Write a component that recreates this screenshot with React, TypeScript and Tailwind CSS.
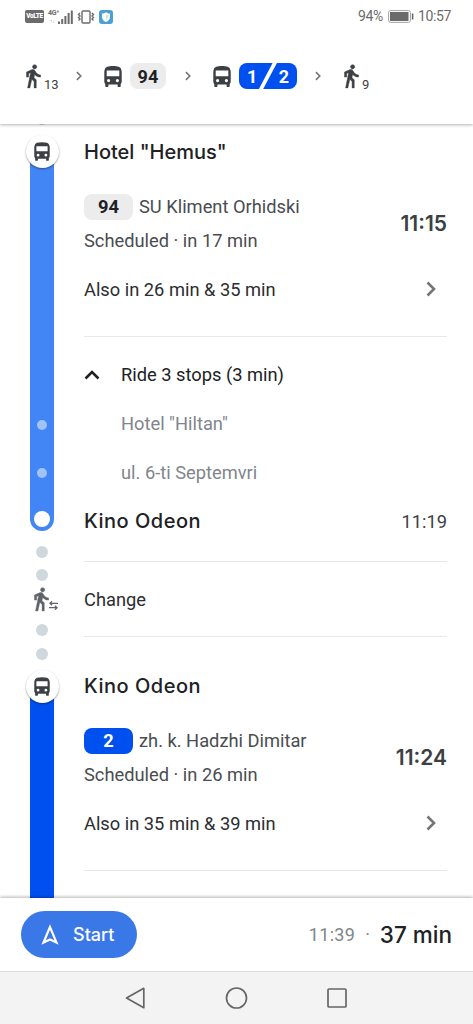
import React from "react";

interface DepartureProps {
  line: string;
  lineClass: string;
  direction: string;
  wait: string;
  also: string;
  time: string;
}

const display = "font-['Inter','Roboto',sans-serif]";

function Chevron({ className }: { className?: string }) {
  return (
    <svg
      viewBox="0 0 10 16"
      className={className}
      fill="none"
      stroke="currentColor"
      strokeWidth="2.6"
    >
      <path d="M1.500 1.500 8 8l-6.500 6.500" />
    </svg>
  );
}

function BusIcon({ className }: { className?: string }) {
  return (
    <svg viewBox="0 0 18 21" className={className} fill="currentColor" fillRule="evenodd">
      <path d="M9 0C4.200 0 1.400.8.900 3.200.5 4 .3 5 .3 6v9.800c0 .9.400 1.600 1 2.100V20c0 .6.400 1 1 1h1.100c.6 0 1-.4 1-1v-1.400h9.200V20c0 .6.400 1 1 1h1.100c.6 0 1-.4 1-1v-2.100c.6-.5 1-1.200 1-2.100V6c0-1-.2-2-.6-2.800C16.600.8 13.800 0 9 0zM2.700 4.500h12.600v5.700H2.700zM4.600 13a1.600 1.600 0 1 1 0 3.200 1.600 1.600 0 0 1 0-3.200zm8.800 0a1.600 1.600 0 1 1 0 3.200 1.600 1.600 0 0 1 0-3.200z" />
    </svg>
  );
}

function WalkIcon({ className }: { className?: string }) {
  return (
    <svg
      viewBox="0 0 24 24"
      className={className}
      fill="currentColor"
      stroke="currentColor"
      strokeWidth="0.400"
    >
      <path d="M13.500 5.500c1.100 0 2-.9 2-2s-.9-2-2-2-2 .9-2 2 .9 2 2 2zM9.800 8.900 7 23h2.100l1.800-8 2.100 2v6h2v-7.500l-2.100-2 .6-3C14.800 12 16.800 13 19 13v-2c-1.900 0-3.500-1-4.300-2.400l-1-1.600c-.4-.6-1-1-1.700-1-.3 0-.5.1-.8.1L6 8.300V13h2V9.600z" />
    </svg>
  );
}

function StatusBar() {
  return (
    <div className="flex h-[33px] items-center justify-between pl-[25px] pr-[22px] text-[#6b6b6b]">
      <div className="flex items-center">
        <span className="flex h-[13px] w-[19px] items-center justify-center rounded-[2px] bg-[#6b6b6b] text-[6.500px] font-black tracking-[-0.4px] text-white">
          VoLTE
        </span>
        <div className="ml-[4px] flex h-[15px] w-[11px] flex-col justify-between">
          <span className="text-[7px] leading-[8px] font-bold tracking-[-0.2px]">
            4G⁺
          </span>
          <span className="pl-[2px] text-[5px] leading-[6px] text-[#a0a0a0]">
            ↑↓
          </span>
        </div>
        <svg viewBox="0 0 15 14" className="-ml-px h-[14px] w-[15px]" fill="currentColor">
          <rect x="0" y="11.500" width="2" height="2.500" />
          <rect x="3.200" y="9" width="2" height="5" />
          <rect x="6.400" y="6" width="2" height="8" />
          <rect x="9.600" y="3" width="2" height="11" />
          <rect x="12.800" y="0.500" width="2" height="13.500" />
        </svg>
        <svg
          viewBox="0 0 18 14"
          className="ml-[4px] h-[14px] w-[18px]"
          fill="none"
          stroke="currentColor"
          strokeWidth="1.400"
        >
          <rect x="5" y="1" width="8" height="12" rx="1" />
          <path d="M3 3 1.500 4.500 3 6 1.500 7.500 3 9 1.500 10.500M15 3l1.500 1.500L15 6l1.500 1.500L15 9l1.500 1.500" />
        </svg>
        <svg viewBox="0 0 14 14" className="ml-[4px] size-[14px]">
          <rect width="14" height="14" rx="3" fill="#4a9fd6" />
          <path
            d="M7 2.300c1.300 1 2.500 1.200 4 1.200v3.200c0 2.500-1.600 4.300-4 5.300-2.400-1-4-2.800-4-5.300V3.500c1.500 0 2.700-.2 4-1.200z"
            fill="#fff"
          />
          <path d="M7 4.500v5.300c1.400-.8 2.100-1.700 2.100-3.200V5.200C8.200 5.200 7.600 5 7 4.500z" fill="#c7e2f3" />
        </svg>
      </div>
      <div className="flex items-center">
        <span className="text-[14px] tracking-[-0.4px]">94%</span>
        <svg viewBox="0 0 26 13" className="ml-[5px] h-[13px] w-[26px]">
          <rect x="0.600" y="0.600" width="21.800" height="11.800" rx="2" fill="none" stroke="#a3a3a3" />
          <rect x="2" y="2" width="18.500" height="9" fill="#6b6b6b" />
          <rect x="23.800" y="3.500" width="1.600" height="6" fill="#6b6b6b" />
        </svg>
        <span className="ml-[4px] text-[14px] tracking-[-0.350px]">10:57</span>
      </div>
    </div>
  );
}

function RouteSummary() {
  return (
    <div className="flex h-[86px] items-center pl-[20px] text-[#3c4043]">
      <WalkIcon className="size-[26px] shrink-0" />
      <span className="-ml-[2px] mt-[17px] w-[16px] text-[13px]">13</span>
      <Chevron className="ml-[16px] h-[10px] w-[6px] text-[#70757a]" />
      <BusIcon className="ml-[22px] h-[21px] w-[18px]" />
      <span className="ml-[8px] flex h-[26px] w-[36px] items-center justify-center rounded-lg bg-[#ececec] text-[18px] font-bold tracking-[0.2px] text-[#202124]">
        94
      </span>
      <Chevron className="ml-[19px] h-[10px] w-[6px] text-[#70757a]" />
      <BusIcon className="ml-[22px] h-[21px] w-[18px]" />
      <span className="relative ml-[8px] flex h-[26px] w-[58px] items-center justify-between overflow-hidden rounded-lg bg-[#0050f0] px-[8px] text-[18px] font-bold text-white">
        <span>1</span>
        <svg viewBox="0 0 24 26" className="absolute left-[17px] top-0 h-[26px] w-[24px]">
          <path d="M4.500 27 19.300-1" stroke="#fff" strokeWidth="3.800" />
        </svg>
        <span>2</span>
      </span>
      <Chevron className="ml-[18px] h-[10px] w-[6px] text-[#70757a]" />
      <WalkIcon className="ml-[17px] size-[26px] shrink-0" />
      <span className="-ml-[2px] mt-[17px] text-[13px]">9</span>
    </div>
  );
}

function StopBadge({ className }: { className?: string }) {
  return (
    <div
      className={`z-10 flex size-[33px] shrink-0 items-center justify-center rounded-full bg-white text-[#3c4043] shadow-[0_1px_2px_rgba(0,0,0,0.4)] ${className ?? ""}`}
    >
      <BusIcon className="h-[19px] w-[16px]" />
    </div>
  );
}

function Dot({ className }: { className?: string }) {
  return (
    <div className={`size-[12px] shrink-0 rounded-full bg-[#cfd8dc] ${className ?? ""}`} />
  );
}

function Rail() {
  return (
    <div className="flex w-[84px] shrink-0 flex-col items-center">
      <Dot className="-mt-[11px]" />
      <StopBadge className="mt-[10px]" />
      <div className="-mt-[16px] flex h-[379px] w-6 shrink-0 flex-col items-center rounded-b-full bg-[#4285f4]">
        <div className="mt-[268px] size-[10px] rounded-full bg-[#a1c2fa]" />
        <div className="mt-[38px] size-[10px] rounded-full bg-[#a1c2fa]" />
        <div className="mt-[33px] size-4 rounded-full bg-white" />
      </div>
      <Dot className="mt-[15px]" />
      <Dot className="mt-[11px]" />
      <div className="mt-[5px] flex h-[27px] w-6 shrink-0 text-[#5f6368]">
        <WalkIcon className="-ml-[2px] size-[26px] shrink-0" />
        <svg
          viewBox="0 0 9 9"
          className="-ml-[5px] mt-[15px] size-[9px] shrink-0"
          fill="none"
          stroke="currentColor"
          strokeWidth="1.300"
        >
          <path d="M9 2.300H1.200M3 .3l-2 2 2 2M0 6.700h7.800M6 4.700l2 2-2 2" />
        </svg>
      </div>
      <Dot className="mt-[11px]" />
      <Dot className="mt-[12px]" />
      <StopBadge className="mt-[10px]" />
      <div className="-mt-[16px] w-6 flex-1 bg-[#0050f0]" />
    </div>
  );
}

function Divider({ className }: { className?: string }) {
  return <div className={`h-px shrink-0 bg-[#e8e8e8] ${className ?? ""}`} />;
}

function StopName({ children, className }: { children: React.ReactNode; className?: string }) {
  return (
    <h2 className={`text-[20px] font-medium text-[#202124] ${display} ${className ?? ""}`}>
      {children}
    </h2>
  );
}

function Departure({ line, lineClass, direction, wait, also, time }: DepartureProps) {
  return (
    <>
      <div className="mt-[10px] flex items-center justify-between">
        <div className="text-[18.300px] leading-[28px] text-[#4a4d51]">
          <div className="flex h-[34px] items-center">
            <span
              className={`mr-[6px] flex h-[26px] w-[49px] items-center justify-center rounded-lg font-bold ${lineClass}`}
            >
              {line}
            </span>
            {direction}
          </div>
          <div className="flex h-[34px] items-center">Scheduled · in {wait}</div>
        </div>
        <span className={`text-[21px] font-semibold text-[#3c4043] ${display}`}>{time}</span>
      </div>
      <div className="flex h-16 items-center justify-between pr-[11px] text-[18.300px] leading-[28px] text-[#2b2d30]">
        {also}
        <Chevron className="mb-[2px] h-[16px] w-[10px] text-[#757575]" />
      </div>
      <Divider className="mt-[14px]" />
    </>
  );
}

export default function App() {
  return (
    <div className="flex h-[1024px] w-[473px] flex-col overflow-hidden bg-white font-['Roboto',sans-serif]">
      <header className="z-20 h-[124px] shrink-0 bg-white shadow-[0_1px_3px_rgba(0,0,0,0.3)]">
        <StatusBar />
        <RouteSummary />
      </header>

      <main className="flex h-[774px] shrink-0 overflow-hidden">
        <Rail />
        <div className="flex flex-1 flex-col pr-[26px]">
          <div className="flex h-14 items-center">
            <StopName>Hotel "Hemus"</StopName>
          </div>
          <Departure
            line="94"
            lineClass="bg-[#ececec] text-[#202124]"
            direction="SU Kliment Orhidski"
            wait="17 min"
            also="Also in 26 min & 35 min"
            time="11:15"
          />

          {/* Intermediate stops */}
          <div className="mt-[13px] flex h-[49px] items-center text-[18.300px] text-[#202124]">
            <Chevron className="ml-[3px] mr-[24px] h-[16px] w-[10px] -rotate-90" />
            Ride 3 stops (3 min)
          </div>
          <div className="flex h-[49px] items-center pl-[37px] text-[18.300px] text-[#80868b]">
            Hotel "Hiltan"
          </div>
          <div className="flex h-[49px] items-center pl-[37px] text-[18.300px] text-[#80868b]">
            ul. 6-ti Septemvri
          </div>
          <div className="flex h-[49px] items-center justify-between">
            <StopName className="pb-px tracking-[0.5px]">Kino Odeon</StopName>
            <span className="text-[18.300px] text-[#3c4043]">11:19</span>
          </div>
          <Divider className="mt-[15px]" />

          <div className="flex h-[74px] items-center pt-px text-[18.300px] leading-[28px] text-[#2b2d30]">
            Change
          </div>
          <Divider />

          <div className="mt-[21px] flex h-14 items-center">
            <StopName className="tracking-[0.5px]">Kino Odeon</StopName>
          </div>
          <Departure
            line="2"
            lineClass="bg-[#0050f0] text-white"
            direction="zh. k. Hadzhi Dimitar"
            wait="26 min"
            also="Also in 35 min & 39 min"
            time="11:24"
          />
        </div>
      </main>

      <footer className="z-20 flex h-[73px] shrink-0 items-center justify-between bg-white pl-[21px] pr-[21px] shadow-[0_-1px_3px_rgba(0,0,0,0.3)]">
        <button
          className={`flex h-[47px] w-[116px] items-center rounded-full bg-[#3b78e7] pl-[20px] text-[18px] font-medium text-white ${display}`}
        >
          <svg
            viewBox="0 0 18 21"
            className="mr-[14px] h-[21px] w-[18px]"
            fill="none"
            stroke="currentColor"
            strokeWidth="2.200"
          >
            <path d="M9 3 2.500 18.500 9 15.500l6.500 3z" />
          </svg>
          Start
        </button>
        <div className="flex items-center">
          <span className="text-[18px] tracking-[0.3px] text-[#80868b]">11:39</span>
          <span className="mx-[10px] text-[18px] text-[#80868b]">·</span>
          <span className={`text-[22.500px] font-medium text-[#202124] ${display}`}>37 min</span>
        </div>
      </footer>

      {/* System navigation */}
      <nav className="z-20 flex h-[53px] shrink-0 items-center border-t border-[#dedede] bg-[#f3f3f3] pl-[125px] text-[#666]">
        <svg
          viewBox="0 0 22 24"
          className="h-[24px] w-[22px]"
          fill="none"
          stroke="currentColor"
          strokeWidth="1.700"
          strokeLinejoin="round"
        >
          <path d="M18.800 2.300v19.400L1.500 12z" />
        </svg>
        <svg
          viewBox="0 0 24 24"
          className="ml-[77px] size-6"
          fill="none"
          stroke="currentColor"
          strokeWidth="1.700"
        >
          <circle cx="12.500" cy="12" r="10" />
        </svg>
        <svg
          viewBox="0 0 24 24"
          className="ml-[77px] size-6"
          fill="none"
          stroke="currentColor"
          strokeWidth="1.700"
        >
          <rect x="3" y="3" width="18" height="18" rx="1" />
        </svg>
      </nav>
    </div>
  );
}
